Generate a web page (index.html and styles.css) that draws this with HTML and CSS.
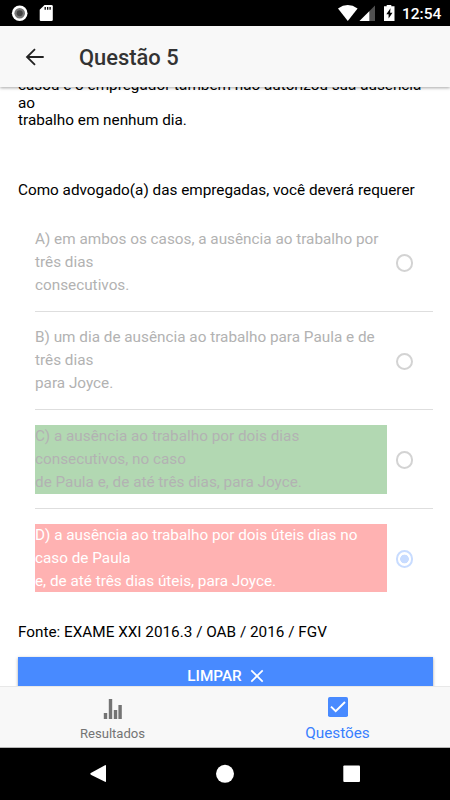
FILE: index.html
```html
<!DOCTYPE html>
<html lang="pt-BR">
<head>
    <meta charset="UTF-8">
    <meta name="viewport" content="width=device-width, initial-scale=1.0">
    <title>Questão 5</title>
    <link rel="stylesheet" href="styles.css">
</head>
<body>
    <!-- Barra de status -->
    <div class="status-bar">
        <svg class="status-left" width="60" height="26" viewBox="0 0 60 26">
            <circle cx="19.7" cy="13.2" r="7.8" fill="#fff"/>
            <circle cx="19.7" cy="13.2" r="5.3" fill="#777"/>
            <circle cx="19.7" cy="13.2" r="3" fill="#444"/>
            <path d="M44.5 5H51.5Q52.8 5 52.8 6.3V19.7Q52.8 21 51.5 21H41Q39.7 21 39.7 19.7V9.8Z" fill="#fff"/>
            <path d="M45.2 7v2.8M47.7 7v2.8M50.1 7v2.8" stroke="#000" stroke-width="1.3"/>
        </svg>
        <div class="status-right">
            <svg width="60" height="26" viewBox="337 0 60 26">
                <path d="M338 8.4Q347.7 1.7 357.6 8.4L347.8 21Z" fill="#fff"/>
                <path d="M375 5.5V21H359.5Z" fill="#505050"/>
                <path d="M369.3 11.2V21H359.5Z" fill="#fff"/>
                <path d="M386.7 5h4.6v1.2h3.2V21H384V6.2h2.7Z" fill="#fff"/>
                <path d="M390.5 8.3L386.3 14.2h2.3v4.4L392.5 12.7h-2.4Z" fill="#000"/>
            </svg>
            <span class="clock">12:54</span>
        </div>
    </div>

    <header class="toolbar">
        <svg class="back" width="20" height="20" viewBox="0 0 20 20">
            <path d="M18.7 10H2.4M10 2.1L2 10L10 17.9" fill="none" stroke="#222" stroke-width="1.8"/>
        </svg>
        <h1>Questão 5</h1>
    </header>

    <main class="content">
        <p class="statement">
            casou e o empregador também não autorizou sua ausência<br>
            ao<br>
            trabalho em nenhum dia.<br>
            <br>
            <br>
            <br>
            Como advogado(a) das empregadas, você deverá requerer
        </p>

        <div class="options">
            <div class="option">
                <div class="label">A) em ambos os casos, a ausência ao trabalho por<br>três dias<br>consecutivos.</div>
                <span class="radio"></span>
            </div>
            <div class="option">
                <div class="label">B) um dia de ausência ao trabalho para Paula e de<br>três dias<br>para Joyce.</div>
                <span class="radio"></span>
            </div>
            <div class="option">
                <div class="label correct">C) a ausência ao trabalho por dois dias<br>consecutivos, no caso<br>de Paula e, de até três dias, para Joyce.</div>
                <span class="radio"></span>
            </div>
            <div class="option">
                <div class="label wrong">D) a ausência ao trabalho por dois úteis dias no<br>caso de Paula<br>e, de até três dias úteis, para Joyce.</div>
                <span class="radio checked"></span>
            </div>
        </div>

        <p class="source">Fonte: EXAME XXI 2016.3 / OAB / 2016 / FGV</p>

        <div class="btn-clear">
            <span>LIMPAR</span>
            <svg width="14" height="14" viewBox="0 0 14 14">
                <path d="M1.3 1.3L12.7 12.7M12.7 1.3L1.3 12.7" stroke="#fff" stroke-width="1.7"/>
            </svg>
        </div>
    </main>

    <!-- Abas -->
    <nav class="tabs">
        <div class="tab">
            <svg width="20" height="20" viewBox="0 0 20 20" fill="#747474">
                <path d="M.8 14h3.4v6H.8zM5.8 0h3.4v20H5.8zM10.8 11h3.4v9h-3.4zM15.4 6h3.4v14h-3.4z"/>
            </svg>
            <span>Resultados</span>
        </div>
        <div class="tab active">
            <svg width="20" height="20" viewBox="0 0 20 20">
                <rect width="20" height="20" rx="1.8" fill="#488aff"/>
                <path d="M3 9.6L7.7 14.2L17 5" fill="none" stroke="#fff" stroke-width="2"/>
            </svg>
            <span>Questões</span>
        </div>
    </nav>

    <div class="android-nav">
        <svg width="450" height="52" viewBox="0 0 450 52" fill="#fff">
            <path d="M90.8 25L105 17.2Q106 16.8 106 17.8V33.2Q106 34.2 105 33.8L90.8 26.7Q89.6 25.9 90.8 25Z"/>
            <circle cx="225" cy="25.8" r="9"/>
            <rect x="343.3" y="17.5" width="16.7" height="16.5" rx="1"/>
        </svg>
    </div>
</body>
</html>
```
FILE: styles.css
```css
* {
    margin: 0;
    padding: 0;
    box-sizing: border-box;
}
body {
    width: 450px;
    height: 800px;
    display: flex;
    flex-direction: column;
    overflow: hidden;
    font-family: Roboto, "Liberation Sans", sans-serif;
    font-size: 15.3px;
    color: #000;
    background: #fff;
}
svg {
    display: block;
    flex: none;
}
.status-bar {
    height: 26px;
    flex: none;
    display: flex;
    justify-content: space-between;
    background: #000;
}
.status-right {
    display: flex;
    padding-right: 9px;
}
.clock {
    width: 44px;
    padding-left: 5px;
    line-height: 28px;
    font-size: 15.5px;
    font-weight: 500;
    color: #fff;
    white-space: nowrap;
}
.toolbar {
    height: 61px;
    flex: none;
    display: flex;
    align-items: center;
    padding-left: 25px;
    background: #f8f8f8;
    box-shadow: 0 1px 3px rgba(0, 0, 0, 0.35);
}
.toolbar h1 {
    margin-left: 34px;
    padding-top: 1px;
    font-size: 21.9px;
    font-weight: 500;
    color: #333;
}
.content {
    flex: 1;
    min-height: 0;
    overflow: hidden;
    padding: 0 17px 0 18px;
}
.statement {
    margin-top: -10px;
    line-height: 17.5px;
    white-space: nowrap;
}
.options {
    margin: 14px 0 0 17px;
}
.option {
    height: 98.45px;
    display: flex;
    align-items: center;
    border-bottom: 1.1px solid #dedede;
}
.option:last-child {
    border-bottom: none;
}
.label {
    width: 352px;
    line-height: 22.95px;
    white-space: nowrap;
    color: #b2b2b2;
}
.correct {
    background: #b2d8b2;
}
.wrong {
    background: #ffb2b2;
    color: #fff;
}
.radio {
    width: 17.5px;
    height: 17.5px;
    margin: 2px 0 0 8.5px;
    border: 2px solid #d3d3d3;
    border-radius: 50%;
}
.checked {
    border-color: #c8dcff;
    background: radial-gradient(circle, #c8dcff 4px, transparent 4.7px);
}
.source {
    margin-top: 15.5px;
    line-height: 18px;
}
.btn-clear {
    height: 39px;
    margin-top: 16px;
    display: flex;
    align-items: center;
    justify-content: center;
    gap: 8px;
    background: #488aff;
    color: #fff;
    font-weight: 500;
    box-shadow: 0 1px 3px rgba(0, 0, 0, 0.35);
}
.tabs {
    height: 62px;
    flex: none;
    display: flex;
    background: #f8f8f8;
    border-top: 1px solid #e8e8e8;
    border-bottom: 1px solid #b5b5b5;
}
.tab {
    flex: 1;
    display: flex;
    flex-direction: column;
    align-items: center;
    padding-top: 12px;
    font-size: 13.1px;
    color: #747474;
}
.tab span {
    margin-top: 7px;
    line-height: 16px;
}
.active {
    padding-top: 10px;
    font-size: 15.3px;
    color: #3880ff;
}
.active span {
    margin-top: 8px;
}
.android-nav {
    height: 52px;
    flex: none;
    background: #000;
}
```
